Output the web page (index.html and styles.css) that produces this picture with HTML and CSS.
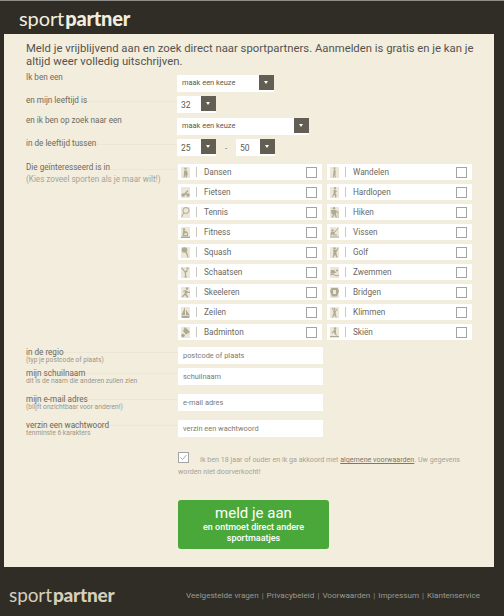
FILE: index.html
```html
<!DOCTYPE html>
<html lang="en">
<head>
  <meta charset="UTF-8">
  <meta name="viewport" content="width=device-width, initial-scale=1.0">
  <title>Sportpartner</title>
  <link rel="stylesheet" href="styles.css">
</head>
<body>
  <svg class="defs" width="0" height="0">
    <symbol id="i-dans" viewBox="0 0 9 11"><circle cx="4.5" cy="1.6" r="1.2"/><path d="M3 3.5h3l.8 3.5-1 3.5h-1L4.500 7.500 3.500 10.500h-1l.5-4z"/></symbol>
    <symbol id="i-fiets" viewBox="0 0 9 11"><circle cx="2.200" cy="8" r="1.800"/><circle cx="7" cy="8" r="1.800"/><path d="M2.500 7.500 5 4.500l2-1.500.5 1-1.500 1.500L5 8z"/></symbol>
    <symbol id="i-tennis" viewBox="0 0 9 11"><circle cx="5" cy="3.500" r="3" fill="none" stroke-width="1"/><path d="M3.200 5.800 1 10l-.8-.5 2.200-4z"/></symbol>
    <symbol id="i-fit" viewBox="0 0 9 11"><circle cx="3" cy="2.500" r="1.200"/><path d="M2 4h3l2 2v3h-1V6.500L4 6 3 8h3v1H1.500zM0 9.500h9V11H0z"/></symbol>
    <symbol id="i-squash" viewBox="0 0 9 11"><circle cx="3.500" cy="3" r="2.800"/><path d="M4.500 5h1.500L7.500 10.500H6.500z"/></symbol>
    <symbol id="i-schaats" viewBox="0 0 9 11"><circle cx="6.500" cy="1.500" r="1.100"/><path d="M0 1l1 -.5L4 4l2-1 1 1-2 1.500V8l1 2.500H3.500L4 8 3.500 5z"/></symbol>
    <symbol id="i-skeel" viewBox="0 0 9 11"><circle cx="6" cy="1.500" r="1.200"/><path d="M2 4l3-1 2.500 2L9 4.500V6H7L6 5.500 5.500 7.500 7 9v1.500H6L4 8 2 10H0.500L3.500 6.500 4 4.500 2.500 5z"/></symbol>
    <symbol id="i-zeil" viewBox="0 0 9 11"><path d="M4 0v8H.5zM5 2.500 8.500 8H5zM0 8.800h9L7.500 11h-6z"/></symbol>
    <symbol id="i-bad" viewBox="0 0 9 11"><path d="M4 0l5 5-4 2.500L2 4z"/><circle cx="2" cy="8.500" r="1.800"/></symbol>
    <symbol id="i-wandel" viewBox="0 0 9 11"><circle cx="4.500" cy="1.200" r="1"/><path d="M3.800 2.500h1.500l.4 3-.4 2 .6 3H5L4.300 8l-.7 2.800h-.8l.6-4.800z"/></symbol>
    <symbol id="i-hard" viewBox="0 0 9 11"><circle cx="5" cy="1.200" r="1.100"/><path d="M3 3.500l2.500-.8L7 5H6L5.500 6.500 6.500 8 6 10.500H5L5 8.500 4 8 2.500 10.500 2 10 3.500 6.500 3.800 4.500z"/></symbol>
    <symbol id="i-hike" viewBox="0 0 9 11"><circle cx="4" cy="1.300" r="1.200"/><path d="M1 3h5l2 3-.8.5L6 5v2l1 3.500H5.500L4.500 7.500 3 10.500H1.500L3 7 1.500 7zM7.800 3.500h.6V11h-.6z"/></symbol>
    <symbol id="i-vis" viewBox="0 0 9 11"><circle cx="2.500" cy="3.500" r="1.200"/><path d="M1 5h3l1 2.500H7v1H3.500L3 6.500 2 8.500H.5zM4 5 8 1l.4.400L4.500 6zM0 9.500h9v1H0z"/></symbol>
    <symbol id="i-golf" viewBox="0 0 9 11"><circle cx="4.500" cy="1.500" r="1.200"/><path d="M3 3h3l2-2.500.6.400L6.500 5v2l1 3.500h-1L5 7.500 3.500 10.500h-1L3.500 6z"/></symbol>
    <symbol id="i-zwem" viewBox="0 0 9 11"><circle cx="7" cy="3.500" r="1.100"/><path d="M1 3h3l1.500 2H7L4 6.500H.5zM0 7.500c1.500-1 3-1 4.500 0s3 1 4.500 0v1c-1.500 1-3 1-4.500 0s-3-1-4.500 0z"/></symbol>
    <symbol id="i-bridge" viewBox="0 0 9 11"><path d="M1.500 1h6L9 4 7 9.500H2L0 4zM3 3v4h3V3z"/></symbol>
    <symbol id="i-klim" viewBox="0 0 9 11"><circle cx="4.500" cy="2" r="1.100"/><path d="M2 1l.8-.3L3.800 3.500h1.800L7 1.500l.7.400-2 3V7l1 3.500h-1L4.500 8 3 10.500H2L3.500 6.500V5z"/></symbol>
    <symbol id="i-ski" viewBox="0 0 9 11"><circle cx="5" cy="1.500" r="1.200"/><path d="M4 3h2v4l1.500 1.500H6.500L4.500 7 4 5 2 6.500 1.500 6zM0 9h9v1H0z"/></symbol>
  </svg>

  <header class="top-bar">
    <div class="logo"><span class="logo-thin">sport</span><span class="logo-bold">partner</span></div>
  </header>

  <main class="panel">
    <p class="intro">Meld je vrijblijvend aan en zoek direct naar sportpartners. Aanmelden is gratis en je kan je altijd weer volledig uitschrijven.</p>

    <div class="row row-first">
      <div class="label no-line">Ik ben een</div>
      <div class="select select-md"><span>maak een keuze</span><i class="arrow"></i></div>
    </div>
    <div class="row row-age">
      <div class="label">en mijn leeftijd is</div>
      <div class="select select-sm"><span>32</span><i class="arrow"></i></div>
    </div>
    <div class="row row-seek">
      <div class="label no-line">en ik ben op zoek naar een</div>
      <div class="select select-lg"><span>maak een keuze</span><i class="arrow"></i></div>
    </div>
    <div class="row row-range">
      <div class="label">in de leeftijd tussen</div>
      <div class="select select-sm"><span>25</span><i class="arrow"></i></div>
      <span class="dash">-</span>
      <div class="select select-sm"><span>50</span><i class="arrow"></i></div>
    </div>

    <div class="row row-sports">
      <div class="label">
        <span class="label-strong">Die geïnteresseerd is in</span>
        <span class="label-hint">(Kies zoveel sporten als je maar wilt!)</span>
      </div>
      <div class="sports">
        <div class="sport"><svg class="sport-icon"><use href="#i-dans"/></svg><span class="sport-name">Dansen</span><i class="check"></i></div>
        <div class="sport"><svg class="sport-icon"><use href="#i-wandel"/></svg><span class="sport-name">Wandelen</span><i class="check"></i></div>
        <div class="sport"><svg class="sport-icon"><use href="#i-fiets"/></svg><span class="sport-name">Fietsen</span><i class="check"></i></div>
        <div class="sport"><svg class="sport-icon"><use href="#i-hard"/></svg><span class="sport-name">Hardlopen</span><i class="check"></i></div>
        <div class="sport"><svg class="sport-icon"><use href="#i-tennis"/></svg><span class="sport-name">Tennis</span><i class="check"></i></div>
        <div class="sport"><svg class="sport-icon"><use href="#i-hike"/></svg><span class="sport-name">Hiken</span><i class="check"></i></div>
        <div class="sport"><svg class="sport-icon"><use href="#i-fit"/></svg><span class="sport-name">Fitness</span><i class="check"></i></div>
        <div class="sport"><svg class="sport-icon"><use href="#i-vis"/></svg><span class="sport-name">Vissen</span><i class="check"></i></div>
        <div class="sport"><svg class="sport-icon"><use href="#i-squash"/></svg><span class="sport-name">Squash</span><i class="check"></i></div>
        <div class="sport"><svg class="sport-icon"><use href="#i-golf"/></svg><span class="sport-name">Golf</span><i class="check"></i></div>
        <div class="sport"><svg class="sport-icon"><use href="#i-schaats"/></svg><span class="sport-name">Schaatsen</span><i class="check"></i></div>
        <div class="sport"><svg class="sport-icon"><use href="#i-zwem"/></svg><span class="sport-name">Zwemmen</span><i class="check"></i></div>
        <div class="sport"><svg class="sport-icon"><use href="#i-skeel"/></svg><span class="sport-name">Skeeleren</span><i class="check"></i></div>
        <div class="sport"><svg class="sport-icon"><use href="#i-bridge"/></svg><span class="sport-name">Bridgen</span><i class="check"></i></div>
        <div class="sport"><svg class="sport-icon"><use href="#i-zeil"/></svg><span class="sport-name">Zeilen</span><i class="check"></i></div>
        <div class="sport"><svg class="sport-icon"><use href="#i-klim"/></svg><span class="sport-name">Klimmen</span><i class="check"></i></div>
        <div class="sport"><svg class="sport-icon"><use href="#i-bad"/></svg><span class="sport-name">Badminton</span><i class="check"></i></div>
        <div class="sport"><svg class="sport-icon"><use href="#i-ski"/></svg><span class="sport-name">Skiën</span><i class="check"></i></div>
      </div>
    </div>

    <div class="row row-region">
      <div class="label field-label">in de regio<small>(typ je postcode of plaats)</small></div>
      <div class="field">postcode of plaats</div>
    </div>
    <div class="row row-nick">
      <div class="label field-label">mijn schuilnaam<small>dit is de naam die anderen zullen zien</small></div>
      <div class="field">schuilnaam</div>
    </div>
    <div class="row row-mail">
      <div class="label field-label">mijn e-mail adres<small>(blijft onzichtbaar voor anderen!)</small></div>
      <div class="field">e-mail adres</div>
    </div>
    <div class="row row-mail">
      <div class="label field-label">verzin een wachtwoord<small>tenminste 6 karakters</small></div>
      <div class="field">verzin een wachtwoord</div>
    </div>

    <p class="terms"><span class="tick"><svg width="9" height="9" viewBox="0 0 9 9"><path d="M1.500 4.500 3.500 6.500 7.500 2" fill="none" stroke="#a9a79f" stroke-width="1"/></svg></span>Ik ben 18 jaar of ouder en ik ga akkoord met <a href="#">algemene voorwaarden</a>. Uw gegevens worden niet doorverkocht!</p>

    <a class="submit" href="#">
      <span class="submit-big">meld je aan</span>
      <span class="submit-small">en ontmoet direct andere sportmaatjes</span>
    </a>
  </main>

  <footer class="bottom-bar">
    <div class="logo logo-footer"><span class="logo-thin">sport</span><span class="logo-bold">partner</span></div>
    <nav class="links">
      <a href="#">Veelgestelde vragen</a><span>|</span><a href="#">Privacybeleid</a><span>|</span><a href="#">Voorwaarden</a><span>|</span><a href="#">Impressum</a><span>|</span><a href="#">Klantenservice</a>
    </nav>
  </footer>
</body>
</html>
```

FILE: styles.css
```css
html, body {
  height: 100%;
}
body {
  margin: 0;
  background-color: #302d27;
  border-top: 1px solid #8f8e8a;
  box-sizing: border-box;
  font-family: Roboto, "Open Sans", sans-serif;
  color: #6b665a;
  overflow: hidden;
}
.defs {
  position: absolute;
}
.top-bar {
  height: 33px;
  padding-left: 19px;
  display: flex;
  align-items: center;
}
.logo {
  color: #f3eddf;
  font-family: Lato, sans-serif;
  font-size: 20px;
  line-height: 24px;
  white-space: nowrap;
}
.logo-thin {
  font-weight: 400;
  letter-spacing: -0.1px;
}
.logo-bold {
  font-weight: 900;
  margin-left: 1px;
  letter-spacing: -0.2px;
}
.logo-footer {
  color: #d6cfbc;
  font-size: 19px;
}

.panel {
  margin: 0 10px 0 4px;
  height: 533px;
  box-sizing: border-box;
  background-color: #f3edde;
  padding: 8px 0 0 22px;
}
.intro {
  margin: 0;
  width: 452px;
  font-size: 11.300px;
  line-height: 13px;
  color: #55534c;
}

.row {
  display: flex;
  align-items: flex-start;
}
.row-first {
  margin-top: 7px;
}
.row-age {
  margin-top: 4px;
}
.row-seek {
  margin-top: 5px;
}
.row-range {
  margin-top: 4px;
}
.row-sports {
  margin-top: 8px;
}
.row-region {
  margin-top: 7px;
}
.row-nick {
  margin-top: 4px;
}
.row-mail {
  margin-top: 9px;
}

.label {
  width: 151px;
  flex: none;
  font-size: 8.150px;
  line-height: 8px;
  color: #6e6a5c;
  background: linear-gradient(#ebe6d6, #ebe6d6) 0 5px / 100% 1px no-repeat;
}
.no-line {
  background: none;
  margin-top: -2px;
}

.select {
  height: 17px;
  background-color: #fff;
  position: relative;
  font-size: 7.450px;
  line-height: 16px;
  padding-left: 5px;
  box-sizing: border-box;
  color: #5d594e;
}
.select-sm {
  width: 39px;
  font-size: 8.500px;
  line-height: 18px;
  padding-left: 4px;
}
.select-md {
  width: 97px;
}
.select-lg {
  width: 132px;
}
.arrow {
  position: absolute;
  top: 0;
  right: 0;
  width: 15px;
  height: 15px;
  background-color: #625e53;
}
.arrow::after {
  content: "";
  position: absolute;
  left: 5px;
  top: 6px;
  border-left: 2.500px solid transparent;
  border-right: 2.500px solid transparent;
  border-top: 3px solid #fff;
}
.dash {
  width: 20px;
  height: 17px;
  text-align: center;
  font-size: 8px;
  line-height: 20px;
}

.label-strong {
  display: block;
  margin-top: -1px;
  color: #6e6a5c;
}
.label-hint {
  display: block;
  color: #a4a595;
  margin-top: 4px;
  white-space: nowrap;
}
.sports {
  display: grid;
  grid-template-columns: 144px 145px;
  column-gap: 5px;
  row-gap: 4px;
  margin-left: 1px;
}
.sport {
  height: 16px;
  background-color: #fff;
  display: flex;
  align-items: center;
  padding-left: 3px;
  padding-right: 5px;
  font-size: 8.200px;
  color: #6a675f;
}
.sport-icon {
  width: 9px;
  height: 11px;
  flex: none;
  background-color: #ece7d6;
  fill: #afa995;
  stroke: #afa995;
  stroke-width: 0;
}
.sport-name {
  flex: 1;
  margin-left: 6px;
  padding: 1px 0 0 8px;
  line-height: 9px;
  background: linear-gradient(#c9c7c0, #c9c7c0) 0 0 / 1px 100% no-repeat;
}
.check {
  width: 9px;
  height: 9px;
  border: 1px solid #a3a3a3;
  background-color: #fff;
  flex: none;
}

.field-label {
  line-height: 8px;
  color: #6b675a;
  background-position: 0 5px;
  padding-top: 1px;
}
.field-label small {
  display: block;
  font-size: 6.700px;
  line-height: 8px;
  color: #9a9788;
}
.field {
  width: 145px;
  height: 17px;
  margin-left: 1px;
  background-color: #fff;
  padding-left: 5px;
  box-sizing: border-box;
  font-size: 7.400px;
  line-height: 18px;
  color: #7b7a74;
}

.terms {
  margin: 15px 0 0 152px;
  width: 290px;
  font-size: 7.130px;
  line-height: 12px;
  color: #a6a397;
}
.tick {
  display: inline-block;
  width: 9px;
  height: 9px;
  border: 1px solid #a3a3a3;
  background-color: #fff;
  margin-right: 11px;
  vertical-align: -1px;
}
.tick svg {
  display: block;
}
.terms a {
  color: #7d786a;
}
.submit {
  display: block;
  width: 151px;
  height: 49px;
  margin: 22px 0 0 152px;
  background-color: #4aa83a;
  border-radius: 3px;
  color: #fff;
  text-align: center;
  text-decoration: none;
  box-sizing: border-box;
  padding-top: 4px;
}
.submit-big {
  display: block;
  font-size: 15px;
  line-height: 18px;
}
.submit-small {
  display: block;
  font-size: 9px;
  line-height: 11px;
  font-weight: 500;
  padding: 0 12px;
}

.bottom-bar {
  height: 49px;
  display: flex;
  justify-content: space-between;
  align-items: center;
  padding: 6px 24px 0 9px;
  box-sizing: border-box;
}
.links {
  font-size: 8.100px;
  color: #8e8c84;
  white-space: nowrap;
}
.links a {
  color: #9b9a90;
  text-decoration: none;
}
.links span {
  margin: 0 3px;
}
```
